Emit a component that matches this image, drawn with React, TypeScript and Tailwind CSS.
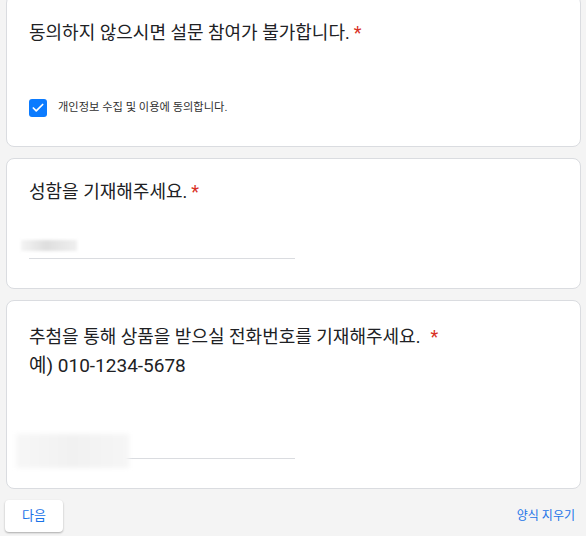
import { Check } from 'lucide-react';

const font = { fontFamily: 'Roboto, "Noto Sans CJK KR", sans-serif' };

function Required() {
  return <span className="text-[#d93025] ml-[4px]">*</span>;
}

export default function App() {
  return (
    <div
      className="min-h-[536px] bg-[#f4f4f4] pl-[6px] pr-[5px] text-[#202124] overflow-hidden"
      style={font}
    >
      {/* Consent card */}
      <div className="-mt-[5px] rounded-[8px] border border-[#dadce0] bg-white pl-[22px] pt-[23px] pb-[29px]">
        <div className="text-[18px] leading-[28px]">
          동의하지 않으시면 설문 참여가 불가합니다.
          <Required />
        </div>
        <label className="mt-[52px] flex items-center gap-[11px]">
          <span className="flex h-[18px] w-[18px] items-center justify-center rounded-[3px] bg-[#0b7bff]">
            <Check size={14} strokeWidth={3} className="text-white" />
          </span>
          <span className="text-[11.25px] leading-[18px] text-[#303030]">개인정보 수집 및 이용에 동의합니다.</span>
        </label>
      </div>

      {/* Name card */}
      <div className="mt-[11px] rounded-[8px] border border-[#dadce0] bg-white pl-[22px] pt-[19px] pb-[29px]">
        <div className="text-[18px] leading-[28px]">
          성함을 기재해주세요.
          <Required />
        </div>
        <div className="relative mt-[24px] h-[29px] w-[266px] border-b border-[#dadce0]">
          <div className="absolute left-[-8px] top-[10px] h-[11px] w-[56px] bg-[linear-gradient(90deg,#f4f4f4,#dedede_45%,#efefef)] blur-[1.5px]" />
        </div>
      </div>

      {/* Phone card */}
      <div className="mt-[11px] rounded-[8px] border border-[#dadce0] bg-white pl-[22px] pt-[21px] pb-[29px]">
        <div className="leading-[29px]">
          <div className="text-[18px]">
            추첨을 통해 상품을 받으실 전화번호를 기재해주세요.
            <span className="text-[#d93025] ml-[10px]">*</span>
          </div>
          <div className="text-[19px]">예) 010-1234-5678</div>
        </div>
        <div className="relative mt-[50px] h-[29px] w-[266px] border-b border-[#dadce0]">
          <div className="absolute left-[-13px] top-[4px] h-[34px] w-[113px] bg-[linear-gradient(90deg,#f7f7f7,#f1f1f1_50%,#f6f6f6)] blur-[2px]" />
        </div>
      </div>

      {/* Footer */}
      <div className="mt-[11px] flex items-center justify-between">
        <button
          type="button"
          className="-ml-[1px] h-[32px] w-[58px] rounded-[4px] bg-white text-[13px] text-[#1a73e8] shadow-[0_1px_2px_rgba(0,0,0,0.3)]"
        >
          다음
        </button>
        <button type="button" className="mr-[6px] text-[12px] text-[#1a73e8]">
          양식 지우기
        </button>
      </div>
    </div>
  );
}
